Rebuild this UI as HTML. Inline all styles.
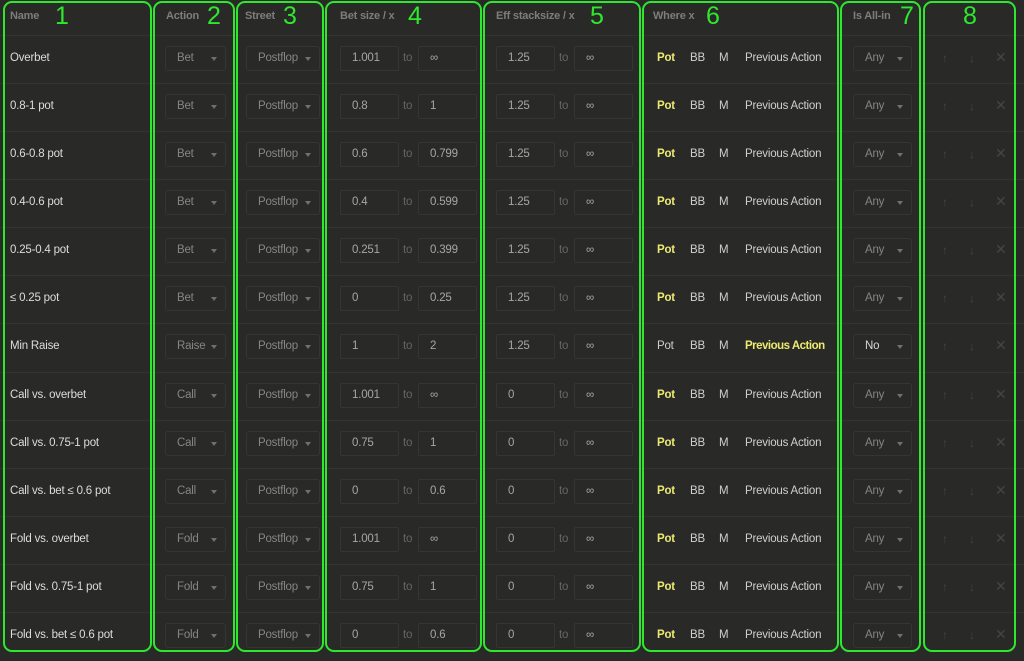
<!DOCTYPE html>
<html><head><meta charset="utf-8">
<style>
*{box-sizing:border-box;margin:0;padding:0}
body{width:1024px;height:661px;background:#292a28;font-family:"Liberation Sans",sans-serif;overflow:hidden;position:relative;font-size:11.5px;letter-spacing:-0.2px}
.line{position:absolute;left:0;width:1024px;height:1px;background:#333432}
.box{position:absolute;top:1px;height:651px;border:2.5px solid #2ee82e;border-radius:9px}
.hd{position:absolute;top:10px;font-weight:bold;color:#7d7e7b;font-size:11px}
.num{position:absolute;top:2px;color:#2ee82e;font-size:25px;letter-spacing:0}
.row{position:absolute;left:0;width:1024px;height:48px}
.row>*{position:absolute}
.nm{left:10px;top:17px;color:#dcdcda}
.sel{top:11px;height:25px;border:1px solid #353634;border-radius:3px;color:#858683;padding:5px 0 0 11px}
.sel:after{content:"";position:absolute;right:8px;top:10px;border-left:3.5px solid transparent;border-right:3.5px solid transparent;border-top:4px solid #6f706d}
.in{top:11px;height:25px;width:59px;border:1px solid #353634;border-radius:2px;color:#a6a7a4;padding:5px 0 0 11px}
.to{top:17px;color:#656663}
.w{top:17px;color:#cfcfcd}
.y{color:#ecea6e;font-weight:bold}
.ic{top:16px;color:#454644;font-size:12px}
.x{font-size:14px;top:14px}
</style></head><body>
<div class="line" style="top:35px"></div>
<div class="line" style="top:83px"></div>
<div class="line" style="top:131px"></div>
<div class="line" style="top:179px"></div>
<div class="line" style="top:227px"></div>
<div class="line" style="top:275px"></div>
<div class="line" style="top:323px"></div>
<div class="line" style="top:372px"></div>
<div class="line" style="top:420px"></div>
<div class="line" style="top:468px"></div>
<div class="line" style="top:516px"></div>
<div class="line" style="top:564px"></div>
<div class="line" style="top:612px"></div>

<div class="box" style="left:3px;width:149px"></div>
<div class="box" style="left:153px;width:82px"></div>
<div class="box" style="left:236px;width:88px"></div>
<div class="box" style="left:325px;width:157px"></div>
<div class="box" style="left:483px;width:158px"></div>
<div class="box" style="left:642px;width:197px"></div>
<div class="box" style="left:840px;width:81px"></div>
<div class="box" style="left:923px;width:93px"></div>

<div class="hd" style="left:10px">Name</div><div class="num" style="left:55px">1</div>
<div class="hd" style="left:166px">Action</div><div class="num" style="left:207px">2</div>
<div class="hd" style="left:245px">Street</div><div class="num" style="left:283px">3</div>
<div class="hd" style="left:340px">Bet size / x</div><div class="num" style="left:408px">4</div>
<div class="hd" style="left:496px">Eff stacksize / x</div><div class="num" style="left:590px">5</div>
<div class="hd" style="left:653px">Where x</div><div class="num" style="left:706px">6</div>
<div class="hd" style="left:853px">Is All-in</div><div class="num" style="left:900px">7</div>
<div class="num" style="left:963px">8</div>

<div class="row" style="top:35px"><span class="nm">Overbet</span><span class="sel" style="left:165px;width:61px">Bet</span><span class="sel" style="left:246px;width:74px">Postflop</span><span class="in" style="left:340px">1.001</span><span class="to" style="left:403px">to</span><span class="in" style="left:418px">∞</span><span class="in" style="left:496px">1.25</span><span class="to" style="left:559px">to</span><span class="in" style="left:574px">∞</span><span class="w y" style="left:657px">Pot</span><span class="w" style="left:690px">BB</span><span class="w" style="left:719px">M</span><span class="w" style="left:745px">Previous Action</span><span class="sel" style="left:853px;width:59px">Any</span><span class="ic" style="left:942px">↑</span><span class="ic" style="left:969px">↓</span><span class="ic x" style="left:995px">✕</span></div>
<div class="row" style="top:83px"><span class="nm">0.8-1 pot</span><span class="sel" style="left:165px;width:61px">Bet</span><span class="sel" style="left:246px;width:74px">Postflop</span><span class="in" style="left:340px">0.8</span><span class="to" style="left:403px">to</span><span class="in" style="left:418px">1</span><span class="in" style="left:496px">1.25</span><span class="to" style="left:559px">to</span><span class="in" style="left:574px">∞</span><span class="w y" style="left:657px">Pot</span><span class="w" style="left:690px">BB</span><span class="w" style="left:719px">M</span><span class="w" style="left:745px">Previous Action</span><span class="sel" style="left:853px;width:59px">Any</span><span class="ic" style="left:942px">↑</span><span class="ic" style="left:969px">↓</span><span class="ic x" style="left:995px">✕</span></div>
<div class="row" style="top:131px"><span class="nm">0.6-0.8 pot</span><span class="sel" style="left:165px;width:61px">Bet</span><span class="sel" style="left:246px;width:74px">Postflop</span><span class="in" style="left:340px">0.6</span><span class="to" style="left:403px">to</span><span class="in" style="left:418px">0.799</span><span class="in" style="left:496px">1.25</span><span class="to" style="left:559px">to</span><span class="in" style="left:574px">∞</span><span class="w y" style="left:657px">Pot</span><span class="w" style="left:690px">BB</span><span class="w" style="left:719px">M</span><span class="w" style="left:745px">Previous Action</span><span class="sel" style="left:853px;width:59px">Any</span><span class="ic" style="left:942px">↑</span><span class="ic" style="left:969px">↓</span><span class="ic x" style="left:995px">✕</span></div>
<div class="row" style="top:179px"><span class="nm">0.4-0.6 pot</span><span class="sel" style="left:165px;width:61px">Bet</span><span class="sel" style="left:246px;width:74px">Postflop</span><span class="in" style="left:340px">0.4</span><span class="to" style="left:403px">to</span><span class="in" style="left:418px">0.599</span><span class="in" style="left:496px">1.25</span><span class="to" style="left:559px">to</span><span class="in" style="left:574px">∞</span><span class="w y" style="left:657px">Pot</span><span class="w" style="left:690px">BB</span><span class="w" style="left:719px">M</span><span class="w" style="left:745px">Previous Action</span><span class="sel" style="left:853px;width:59px">Any</span><span class="ic" style="left:942px">↑</span><span class="ic" style="left:969px">↓</span><span class="ic x" style="left:995px">✕</span></div>
<div class="row" style="top:227px"><span class="nm">0.25-0.4 pot</span><span class="sel" style="left:165px;width:61px">Bet</span><span class="sel" style="left:246px;width:74px">Postflop</span><span class="in" style="left:340px">0.251</span><span class="to" style="left:403px">to</span><span class="in" style="left:418px">0.399</span><span class="in" style="left:496px">1.25</span><span class="to" style="left:559px">to</span><span class="in" style="left:574px">∞</span><span class="w y" style="left:657px">Pot</span><span class="w" style="left:690px">BB</span><span class="w" style="left:719px">M</span><span class="w" style="left:745px">Previous Action</span><span class="sel" style="left:853px;width:59px">Any</span><span class="ic" style="left:942px">↑</span><span class="ic" style="left:969px">↓</span><span class="ic x" style="left:995px">✕</span></div>
<div class="row" style="top:275px"><span class="nm">≤ 0.25 pot</span><span class="sel" style="left:165px;width:61px">Bet</span><span class="sel" style="left:246px;width:74px">Postflop</span><span class="in" style="left:340px">0</span><span class="to" style="left:403px">to</span><span class="in" style="left:418px">0.25</span><span class="in" style="left:496px">1.25</span><span class="to" style="left:559px">to</span><span class="in" style="left:574px">∞</span><span class="w y" style="left:657px">Pot</span><span class="w" style="left:690px">BB</span><span class="w" style="left:719px">M</span><span class="w" style="left:745px">Previous Action</span><span class="sel" style="left:853px;width:59px">Any</span><span class="ic" style="left:942px">↑</span><span class="ic" style="left:969px">↓</span><span class="ic x" style="left:995px">✕</span></div>
<div class="row" style="top:323px"><span class="nm">Min Raise</span><span class="sel" style="left:165px;width:61px">Raise</span><span class="sel" style="left:246px;width:74px">Postflop</span><span class="in" style="left:340px">1</span><span class="to" style="left:403px">to</span><span class="in" style="left:418px">2</span><span class="in" style="left:496px">1.25</span><span class="to" style="left:559px">to</span><span class="in" style="left:574px">∞</span><span class="w" style="left:657px">Pot</span><span class="w" style="left:690px">BB</span><span class="w" style="left:719px">M</span><span class="w y" style="left:745px;letter-spacing:-0.5px">Previous Action</span><span class="sel" style="left:853px;width:59px;color:#d8d8d6">No</span><span class="ic" style="left:942px">↑</span><span class="ic" style="left:969px">↓</span><span class="ic x" style="left:995px">✕</span></div>
<div class="row" style="top:372px"><span class="nm">Call vs. overbet</span><span class="sel" style="left:165px;width:61px">Call</span><span class="sel" style="left:246px;width:74px">Postflop</span><span class="in" style="left:340px">1.001</span><span class="to" style="left:403px">to</span><span class="in" style="left:418px">∞</span><span class="in" style="left:496px">0</span><span class="to" style="left:559px">to</span><span class="in" style="left:574px">∞</span><span class="w y" style="left:657px">Pot</span><span class="w" style="left:690px">BB</span><span class="w" style="left:719px">M</span><span class="w" style="left:745px">Previous Action</span><span class="sel" style="left:853px;width:59px">Any</span><span class="ic" style="left:942px">↑</span><span class="ic" style="left:969px">↓</span><span class="ic x" style="left:995px">✕</span></div>
<div class="row" style="top:420px"><span class="nm">Call vs. 0.75-1 pot</span><span class="sel" style="left:165px;width:61px">Call</span><span class="sel" style="left:246px;width:74px">Postflop</span><span class="in" style="left:340px">0.75</span><span class="to" style="left:403px">to</span><span class="in" style="left:418px">1</span><span class="in" style="left:496px">0</span><span class="to" style="left:559px">to</span><span class="in" style="left:574px">∞</span><span class="w y" style="left:657px">Pot</span><span class="w" style="left:690px">BB</span><span class="w" style="left:719px">M</span><span class="w" style="left:745px">Previous Action</span><span class="sel" style="left:853px;width:59px">Any</span><span class="ic" style="left:942px">↑</span><span class="ic" style="left:969px">↓</span><span class="ic x" style="left:995px">✕</span></div>
<div class="row" style="top:468px"><span class="nm">Call vs. bet ≤ 0.6 pot</span><span class="sel" style="left:165px;width:61px">Call</span><span class="sel" style="left:246px;width:74px">Postflop</span><span class="in" style="left:340px">0</span><span class="to" style="left:403px">to</span><span class="in" style="left:418px">0.6</span><span class="in" style="left:496px">0</span><span class="to" style="left:559px">to</span><span class="in" style="left:574px">∞</span><span class="w y" style="left:657px">Pot</span><span class="w" style="left:690px">BB</span><span class="w" style="left:719px">M</span><span class="w" style="left:745px">Previous Action</span><span class="sel" style="left:853px;width:59px">Any</span><span class="ic" style="left:942px">↑</span><span class="ic" style="left:969px">↓</span><span class="ic x" style="left:995px">✕</span></div>
<div class="row" style="top:516px"><span class="nm">Fold vs. overbet</span><span class="sel" style="left:165px;width:61px">Fold</span><span class="sel" style="left:246px;width:74px">Postflop</span><span class="in" style="left:340px">1.001</span><span class="to" style="left:403px">to</span><span class="in" style="left:418px">∞</span><span class="in" style="left:496px">0</span><span class="to" style="left:559px">to</span><span class="in" style="left:574px">∞</span><span class="w y" style="left:657px">Pot</span><span class="w" style="left:690px">BB</span><span class="w" style="left:719px">M</span><span class="w" style="left:745px">Previous Action</span><span class="sel" style="left:853px;width:59px">Any</span><span class="ic" style="left:942px">↑</span><span class="ic" style="left:969px">↓</span><span class="ic x" style="left:995px">✕</span></div>
<div class="row" style="top:564px"><span class="nm">Fold vs. 0.75-1 pot</span><span class="sel" style="left:165px;width:61px">Fold</span><span class="sel" style="left:246px;width:74px">Postflop</span><span class="in" style="left:340px">0.75</span><span class="to" style="left:403px">to</span><span class="in" style="left:418px">1</span><span class="in" style="left:496px">0</span><span class="to" style="left:559px">to</span><span class="in" style="left:574px">∞</span><span class="w y" style="left:657px">Pot</span><span class="w" style="left:690px">BB</span><span class="w" style="left:719px">M</span><span class="w" style="left:745px">Previous Action</span><span class="sel" style="left:853px;width:59px">Any</span><span class="ic" style="left:942px">↑</span><span class="ic" style="left:969px">↓</span><span class="ic x" style="left:995px">✕</span></div>
<div class="row" style="top:612px"><span class="nm">Fold vs. bet ≤ 0.6 pot</span><span class="sel" style="left:165px;width:61px">Fold</span><span class="sel" style="left:246px;width:74px">Postflop</span><span class="in" style="left:340px">0</span><span class="to" style="left:403px">to</span><span class="in" style="left:418px">0.6</span><span class="in" style="left:496px">0</span><span class="to" style="left:559px">to</span><span class="in" style="left:574px">∞</span><span class="w y" style="left:657px">Pot</span><span class="w" style="left:690px">BB</span><span class="w" style="left:719px">M</span><span class="w" style="left:745px">Previous Action</span><span class="sel" style="left:853px;width:59px">Any</span><span class="ic" style="left:942px">↑</span><span class="ic" style="left:969px">↓</span><span class="ic x" style="left:995px">✕</span></div>
</body></html>
